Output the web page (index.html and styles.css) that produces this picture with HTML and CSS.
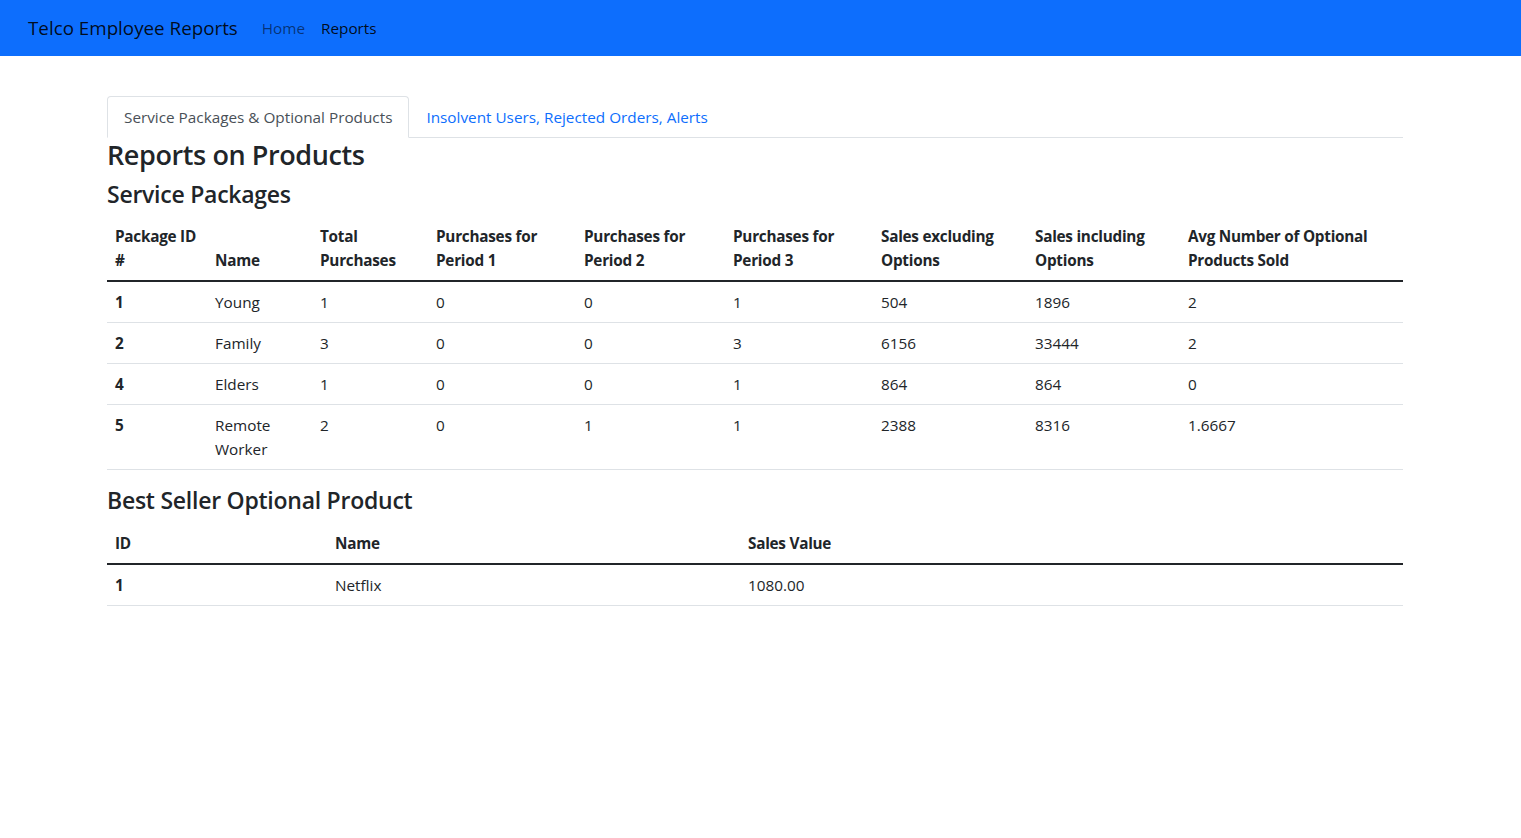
FILE: index.html
```html
<!DOCTYPE html>
<html lang="en">
<head>
<meta charset="utf-8">
<title>Telco Employee Reports</title>
<link rel="stylesheet" href="styles.css">
</head>
<body>
<nav class="navbar">
  <a class="brand" href="#">Telco Employee Reports</a>
  <ul class="nav-links">
    <li><a class="nav-link" href="#">Home</a></li>
    <li><a class="nav-link active" href="#">Reports</a></li>
  </ul>
</nav>
<main class="container">
  <ul class="tabs">
    <li><a class="tab active" href="#">Service Packages &amp; Optional Products</a></li>
    <li><a class="tab" href="#">Insolvent Users, Rejected Orders, Alerts</a></li>
  </ul>
  <h3 class="title">Reports on Products</h3>
  <h4 class="subtitle">Service Packages</h4>
  <table class="table packages">
    <thead>
      <tr>
        <th>Package ID #</th>
        <th>Name</th>
        <th>Total Purchases</th>
        <th>Purchases for Period 1</th>
        <th>Purchases for Period 2</th>
        <th>Purchases for Period 3</th>
        <th>Sales excluding Options</th>
        <th>Sales including Options</th>
        <th>Avg Number of Optional Products Sold</th>
      </tr>
    </thead>
    <tbody>
      <tr><th>1</th><td>Young</td><td>1</td><td>0</td><td>0</td><td>1</td><td>504</td><td>1896</td><td>2</td></tr>
      <tr><th>2</th><td>Family</td><td>3</td><td>0</td><td>0</td><td>3</td><td>6156</td><td>33444</td><td>2</td></tr>
      <tr><th>4</th><td>Elders</td><td>1</td><td>0</td><td>0</td><td>1</td><td>864</td><td>864</td><td>0</td></tr>
      <tr><th>5</th><td>Remote Worker</td><td>2</td><td>0</td><td>1</td><td>1</td><td>2388</td><td>8316</td><td>1.6667</td></tr>
    </tbody>
  </table>
  <h4 class="subtitle">Best Seller Optional Product</h4>
  <table class="table bestseller">
    <thead>
      <tr><th>ID</th><th>Name</th><th>Sales Value</th></tr>
    </thead>
    <tbody>
      <tr><th>1</th><td>Netflix</td><td>1080.00</td></tr>
    </tbody>
  </table>
</main>
</body>
</html>
```

FILE: styles.css
```css
* { box-sizing: border-box; }
html, body { margin: 0; padding: 0; }
body {
  font-family: "Open Sans", "Noto Sans", sans-serif;
  font-size: 15.3px;
  line-height: 24px;
  color: #212529;
  background: #fff;
}
a { text-decoration: none; }

.navbar {
  background: #0d6efd;
  height: 56px;
  display: flex;
  align-items: center;
  padding: 0 12px 0 28px;
}
.brand {
  font-size: 18.8px;
  line-height: 30px;
  color: rgba(0,0,0,.9);
  margin-right: 16px;
}
.nav-links {
  list-style: none;
  margin: 0;
  padding: 0;
  display: flex;
}
.nav-link {
  display: block;
  padding: 8px;
  color: rgba(0,0,0,.55);
}
.nav-link.active { color: rgba(0,0,0,.9); }

.container {
  width: 1320px;
  padding: 0 12px;
  margin: 40px 0 0 95px;
}

.tabs {
  list-style: none;
  margin: 0;
  padding: 0;
  display: flex;
  border-bottom: 1px solid #dee2e6;
}
.tab {
  display: block;
  padding: 8px 16px;
  margin-bottom: -1px;
  border: 1px solid transparent;
  border-top-left-radius: 4px;
  border-top-right-radius: 4px;
  color: #0d6efd;
}
.tab.active {
  color: #495057;
  background: #fff;
  border-color: #dee2e6 #dee2e6 #fff;
}

.title, .subtitle {
  margin: 0 0 8px;
  font-weight: 600;
}
.title {
  font-size: 27px;
  line-height: 33.6px;
  letter-spacing: -0.4px;
}
.subtitle {
  font-size: 23px;
  line-height: 28.8px;
  letter-spacing: -0.25px;
}

.table {
  width: 100%;
  border-collapse: collapse;
  table-layout: fixed;
  margin-bottom: 16px;
}
.table th, .table td {
  padding: 8px;
  text-align: left;
  vertical-align: top;
  border-bottom: 1px solid #dee2e6;
}
.table thead th {
  vertical-align: bottom;
  border-bottom: 2px solid #212529;
}
.table th {
  font-weight: 700;
  letter-spacing: -0.25px;
}
.table td { font-weight: 400; }

.packages th:nth-child(1) { width: 100px; }
.packages th:nth-child(2) { width: 105px; }
.packages th:nth-child(3) { width: 116px; }
.packages th:nth-child(4) { width: 148px; }
.packages th:nth-child(5) { width: 149px; }
.packages th:nth-child(6) { width: 148px; }
.packages th:nth-child(7) { width: 154px; }
.packages th:nth-child(8) { width: 153px; }
.packages th:nth-child(9) { width: 223px; }

.bestseller th:nth-child(1) { width: 220px; }
.bestseller th:nth-child(2) { width: 413px; }
.bestseller th:nth-child(3) { width: 663px; }
```
